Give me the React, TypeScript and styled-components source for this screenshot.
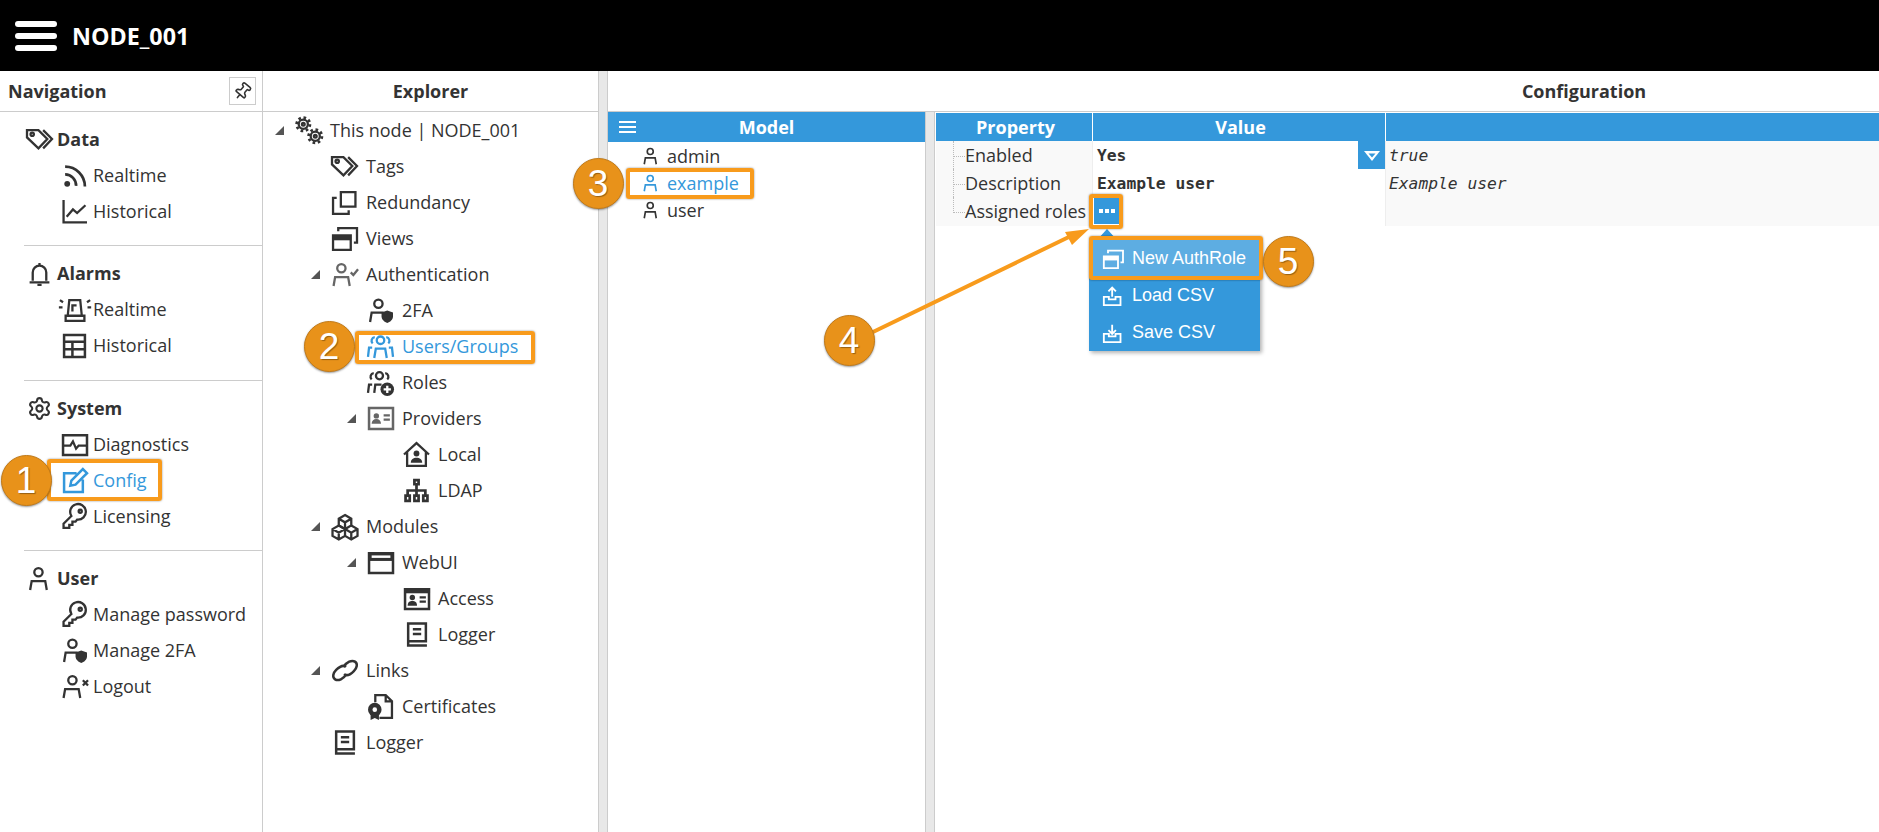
import React from 'react';
import styled, { createGlobalStyle } from 'styled-components';
import { Pin, Settings } from 'lucide-react';

const Global = createGlobalStyle`
  html, body { margin: 0; padding: 0; background: #fff; overflow: hidden; }
  body { font-family: "Open Sans", "Liberation Sans", sans-serif; color: #333; }
`;

const BLUE = '#3498db';
const ORANGE = '#f89b1c';

const Page = styled.div`
  position: relative;
  width: 1879px;
  height: 832px;
  overflow: hidden;
  display: flex;
  flex-direction: column;
`;

const TopBar = styled.header`
  height: 71px;
  flex: none;
  background: #000;
  display: flex;
  align-items: center;
  padding-left: 15px;
  gap: 15px;
`;
const Burger = styled.div`
  width: 42px;
  display: flex;
  flex-direction: column;
  gap: 6px;
  span { height: 6px; border-radius: 3px; background: #fff; }
`;
const NodeName = styled.div`
  color: #fff;
  font-weight: 700;
  font-size: 23.300px;
`;

const Body = styled.div`
  flex: 1;
  display: flex;
  min-height: 0;
`;

const NavPanel = styled.aside`
  width: 262px;
  flex: none;
  border-right: 1px solid #ccc;
`;
const ExplorerPanel = styled.section`
  width: 335px;
  flex: none;
`;
const Splitter = styled.div`
  width: 8px;
  flex: none;
  background: #e8e8e8;
  border-left: 1px solid #ccc;
  border-right: 1px solid #ccc;
`;
const ConfigPanel = styled.section`
  width: 1952px;
  flex: none;
  display: flex;
  flex-direction: column;
`;
const PanelHead = styled.div<{ $left?: boolean }>`
  height: 40px;
  flex: none;
  border-bottom: 1px solid #ccc;
  display: flex;
  align-items: center;
  justify-content: ${p => (p.$left ? 'space-between' : 'center')};
  padding: ${p => (p.$left ? '0 6px 0 8px' : '0')};
  font-weight: 700;
  font-size: 18px;
`;
const PinButton = styled.div`
  width: 25px;
  height: 26px;
  border: 1px solid #ccc;
  display: flex;
  align-items: center;
  justify-content: center;
  svg { transform: rotate(40deg); }
`;

const NavSection = styled.div<{ $last?: boolean; $pad?: number }>`
  margin-left: 24px;
  padding: 9px 0 ${p => p.$pad ?? 16}px;
  border-bottom: ${p => (p.$last ? 'none' : '1px solid #ccc')};
`;
const NavHeading = styled.div`
  height: 36px;
  display: flex;
  align-items: center;
  gap: 5px;
  padding-left: 3px;
  font-weight: 700;
  font-size: 18px;
`;
const NavItem = styled.div<{ $active?: boolean }>`
  height: 36px;
  display: flex;
  align-items: center;
  gap: 6px;
  padding-left: 38px;
  font-size: 18px;
  color: ${p => (p.$active ? BLUE : '#333')};
`;

const IconBox = styled.svg<{ $gray?: boolean }>`
  width: 25px;
  height: 25px;
  flex: none;
  overflow: visible;
  fill: none;
  stroke: ${p => (p.$gray ? '#666' : 'currentColor')};
  stroke-width: 2.200;
  .solid { fill: ${p => (p.$gray ? '#666' : 'currentColor')}; stroke: none; }
  .knock { fill: #fff; stroke: none; }
`;

const TreeRow = styled.div<{ $level: number; $active?: boolean }>`
  height: 36px;
  display: flex;
  align-items: center;
  padding-left: ${p => 12 + p.$level * 36}px;
  font-size: 18px;
  white-space: nowrap;
  color: ${p => (p.$active ? BLUE : '#333')};
`;
const Caret = styled.span<{ $open?: boolean }>`
  width: 21px;
  flex: none;
  display: flex;
  &::before {
    content: '';
    visibility: ${p => (p.$open ? 'visible' : 'hidden')};
    border-style: solid;
    border-width: 0 0 9px 9px;
    border-color: transparent transparent #555 transparent;
  }
`;
const TreeLabel = styled.span`
  margin-left: 9px;
`;

const ConfigBody = styled.div`
  flex: 1;
  display: flex;
  min-height: 0;
`;
const ModelPane = styled.div`
  width: 317px;
  flex: none;
`;
const BlueHead = styled.div`
  height: 30px;
  background: ${BLUE};
  color: #fff;
  font-weight: 700;
  font-size: 18px;
  display: flex;
  align-items: center;
  justify-content: center;
  position: relative;
`;
const MiniBurger = styled.div`
  position: absolute;
  left: 11px;
  top: 9px;
  width: 17px;
  display: flex;
  flex-direction: column;
  gap: 3px;
  span { height: 2px; background: #fff; }
`;
const ModelRow = styled.div<{ $active?: boolean }>`
  height: 27px;
  display: flex;
  align-items: center;
  gap: 7px;
  padding-left: 34px;
  font-size: 18px;
  color: ${p => (p.$active ? BLUE : '#333')};
  svg { width: 18px; height: 18px; }
`;

const Grid = styled.div`
  margin-left: 1px;
  padding-top: 1px;
  flex: 1;
`;
const GridRow = styled.div<{ $head?: boolean }>`
  display: grid;
  grid-template-columns: 157px 293px 1fr;
  height: 28px;
  box-sizing: border-box;
  border-bottom: ${p => (p.$head ? 'none' : '1px solid #eee')};
  background: ${p => (p.$head ? BLUE : 'transparent')};
`;
const HeadCell = styled.div`
  color: #fff;
  font-weight: 700;
  font-size: 18px;
  display: flex;
  align-items: center;
  justify-content: center;
  padding-left: 3px;
  border-right: 1px solid #fff;
`;
const PropCell = styled.div<{ $last?: boolean }>`
  position: relative;
  background: #f9f9f9;
  border-right: 1px solid #eee;
  padding-left: 29px;
  font-size: 18px;
  line-height: 29px;
  white-space: nowrap;
  &::before {
    content: '';
    position: absolute;
    left: 17px;
    top: 0;
    height: ${p => (p.$last ? '16px' : '28px')};
    border-left: 1px dotted #bbb;
  }
  &::after {
    content: '';
    position: absolute;
    left: 18px;
    top: 15px;
    width: 11px;
    border-top: 1px dotted #bbb;
  }
`;
const ValueCell = styled.div`
  position: relative;
  background: #fff;
  border-right: 1px solid #eee;
  padding-left: 4px;
  font-family: "DejaVu Sans Mono", "Liberation Mono", monospace;
  font-weight: 700;
  font-size: 16.300px;
  line-height: 29px;
`;
const DefaultCell = styled.div`
  background: #f9f9f9;
  padding-left: 3px;
  font-family: "DejaVu Sans Mono", "Liberation Mono", monospace;
  font-style: italic;
  font-size: 16.300px;
  line-height: 29px;
`;
const SelectArrow = styled.div`
  position: absolute;
  right: 0;
  top: 0;
  bottom: 0;
  width: 27px;
  background: ${BLUE};
  display: flex;
  align-items: center;
  justify-content: center;
`;
const EllipsisButton = styled.div`
  position: absolute;
  left: 1px;
  top: 0;
  width: 25px;
  height: 27px;
  background: ${BLUE};
  display: flex;
  align-items: center;
  justify-content: center;
  gap: 2px;
  i { width: 4px; height: 4px; background: #fff; }
`;
const Menu = styled.div`
  position: absolute;
  left: -4px;
  top: 43px;
  width: 171px;
  background: ${BLUE};
  box-shadow: 2px 2px 4px rgba(0, 0, 0, 0.3);
  color: #fff;
  font-family: "Liberation Sans", Arial, sans-serif;
  font-weight: 400;
  font-size: 18px;
  &::before {
    content: '';
    position: absolute;
    left: 8px;
    top: -11px;
    border-style: solid;
    border-width: 0 10px 11px 10px;
    border-color: transparent transparent ${BLUE} transparent;
  }
`;
const MenuItem = styled.div<{ $hover?: boolean }>`
  height: 37px;
  display: flex;
  align-items: center;
  gap: 9px;
  padding-left: 14px;
  background: ${p => (p.$hover ? '#5dade2' : 'transparent')};
  svg { width: 20px; height: 20px; }
`;

const Highlight = styled.div<{ $x: number; $y: number; $w: number; $h: number }>`
  position: absolute;
  left: ${p => p.$x}px;
  top: ${p => p.$y}px;
  width: ${p => p.$w}px;
  height: ${p => p.$h}px;
  box-sizing: border-box;
  border: 4px solid ${ORANGE};
  border-radius: 3px;
  box-shadow: 0 0 2px rgba(0, 0, 0, 0.5);
`;
const Badge = styled.div<{ $x: number; $y: number }>`
  position: absolute;
  left: ${p => p.$x - 25.500}px;
  top: ${p => p.$y - 25.500}px;
  width: 51px;
  height: 51px;
  box-sizing: border-box;
  border-radius: 50%;
  background: #e8921a;
  border: 1px solid #c27a17;
  box-shadow: 0 1px 2px rgba(0, 0, 0, 0.4);
  color: #fff;
  font-family: "Liberation Sans", Arial, sans-serif;
  font-size: 37px;
  line-height: 49px;
  text-align: center;
  text-shadow: 1px 1px 1px rgba(0, 0, 0, 0.35);
`;
const ArrowLayer = styled.svg`
  position: absolute;
  left: 0;
  top: 0;
  width: 1879px;
  height: 832px;
  pointer-events: none;
`;

const gear = (x: number, y: number, r: number) => (
  <>
    <circle cx={x} cy={y} r={r} />
    <circle cx={x} cy={y} r={r + 2} strokeWidth={2.600} strokeDasharray="2.500 2.530" />
    <circle cx={x} cy={y} r={r * 0.3} />
  </>
);

const userBody = (
  <>
    <circle cx="11" cy="6" r="4" />
    <path d="M3 23l1.500-8.500h13L19 23" />
  </>
);

const paths: Record<string, React.ReactNode> = {
  tags: (
    <>
      <path d="M0 3h11l8.500 8.500-8.500 9L0 10z" />
      <circle cx="5" cy="7" r="1.600" />
      <path d="M15.500 3l8.500 8.500-8.500 9" />
    </>
  ),
  rss: (
    <>
      <circle className="solid" cx="5" cy="20" r="2.800" />
      <path d="M3 11a10.500 10.500 0 0 1 10.500 11M3 3.500a19 19 0 0 1 19 19" strokeWidth="2.600" />
    </>
  ),
  chart: <path d="M1.500 1v21.500H24M4.500 17l6-7 4 3.500L22.500 6" />,
  bell: (
    <>
      <path d="M5.500 19v-8a6.500 6.500 0 0 1 13 0v8M2.500 20.500h19" />
      <path d="M12 2v2.500M10 23h4" />
    </>
  ),
  siren: (
    <>
      <path d="M5.500 18L7 3h10.500L19 18M3.500 18h18v5h-18zM10 14V8h4" />
      <path d="M-2 3l3 2M-3 10h3.500M27 3l-3 2M28 10h-3.500" />
    </>
  ),
  table: <path d="M2 2h20v21H2zM2 8.500h20M2 15.500h20M10 8.500V23" strokeWidth="2.400" />,
  pulse: (
    <>
      <path d="M1 3h23v19H1z" strokeWidth="2.400" />
      <path d="M1 13h7l2.500-4 3 7 2.500-3h8" />
    </>
  ),
  edit: <path d="M14 5H2v18h18V11M8 17l1-5L20 1l4 4-11 11z" strokeWidth="2.400" />,
  key: (
    <>
      <path d="M9 11.500L1.500 19v4h5.500v-3h3v-3h3l1.500-2A7.500 7.500 0 1 0 9 11.500z" strokeWidth="2.200" />
      <circle cx="17.500" cy="7" r="1.500" />
    </>
  ),
  user: userBody,
  userShield: (
    <>
      <circle cx="10" cy="5.500" r="4" />
      <path d="M2 23l1.500-9H15" />
      <path className="solid" d="M13 14l5.500-2 5.500 2v3.500c0 3.500-3 5.500-5.500 6.500-2.500-1-5.500-3-5.500-6.500z" />
    </>
  ),
  userX: (
    <>
      <circle cx="10" cy="6" r="4" />
      <path d="M1.500 23L3 14.500h13l1.500 8.500M20 6l5 5M25 6l-5 5" />
    </>
  ),
  userCheck: (
    <>
      <circle cx="9" cy="6" r="4" />
      <path d="M1.500 23L3 14.500h12.500L17 23M18 10l2.500 2.500L25 7" />
    </>
  ),
  users: (
    <>
      <circle cx="12" cy="6" r="3.600" />
      <path d="M6 23l1.500-9h9L18 23" />
      <path d="M4.500 9a3.500 3.500 0 0 1 2-6M19.500 9a3.500 3.500 0 0 0-2-6M0 22l1-9h3M24 22l-1-9h-3" />
    </>
  ),
  usersPlus: (
    <>
      <circle cx="11" cy="5.500" r="3.400" />
      <path d="M3.500 9a3.500 3.500 0 0 1 2-6M18.500 9a3.500 3.500 0 0 0-2-6M0 22l1-8h3M6 22l1-8h6" />
      <circle className="solid" cx="18.500" cy="18.500" r="6.500" />
      <path d="M18.500 15v7M15 18.500h7" stroke="#fff" />
    </>
  ),
  copy: <path d="M8.500 2h14v14h-14zM4.500 7.500H1V23h15v-3.500" />,
  views: (
    <>
      <path d="M1 9h17v14H1zM1 12.500h17" />
      <path className="solid" d="M1 9h17v4.500H1z" />
      <path d="M6 5V2h18v14h-3" />
    </>
  ),
  card: (
    <>
      <path d="M1 2h23v20H1z" strokeWidth="2.400" />
      <circle className="solid" cx="8" cy="9.500" r="2.600" />
      <path className="solid" d="M3.500 17c0-3 2-4.500 4.500-4.500s4.500 1.500 4.500 4.500z" />
      <path d="M15 9h6M15 13h6" />
    </>
  ),
  home: (
    <>
      <path d="M0 12L12 1l12 11M3 9.500V23h18V9.500" strokeWidth="2.200" />
      <circle className="solid" cx="12" cy="11" r="2.800" />
      <path className="solid" d="M6.500 20c0-3.500 2.500-5 5.500-5s5.500 1.500 5.500 5z" />
    </>
  ),
  sitemap: <path d="M10 2h4v4h-4zM12 6v6M3.500 16.500v-4.500h17v4.500M1.500 17h4v5h-4zM10 17h4v5h-4zM18.500 17h4v5h-4zM12 12v5" strokeWidth="2.600" />,
  cubes: (
    <>
      <path d="M12.500 1l6 3.500v6.500l-6 3.500-6-3.500V4.500zM6.500 4.500l6 3.500 6-3.500M12.500 8v6.500" />
      <path d="M6.500 11l6 3.500V21l-6 3.500L.5 21v-6.500zM.5 14.500l6 3.500 6-3.500M6.500 18v6.500" />
      <path d="M18.500 11l6 3.500V21l-6 3.500-6-3.500M12.500 14.500l6 3.500 6-3.500M18.500 18v6.500" />
    </>
  ),
  web: (
    <>
      <path d="M1 3h23v19H1z" strokeWidth="2.400" />
      <path className="solid" d="M1 3h23v7.500H1z" />
      <path className="knock" d="M3.500 5.200h18v2.400h-18z" />
    </>
  ),
  access: (
    <>
      <path className="solid" d="M0 2h25v5H0z" />
      <path d="M1 3h23v19H1z" strokeWidth="2.400" />
      <circle className="solid" cx="8" cy="11" r="2.600" />
      <path className="solid" d="M3.500 19c0-3.500 2-4.500 4.500-4.500s4.500 1 4.500 4.500z" />
      <path d="M15 11h6M15 15h6" />
    </>
  ),
  book: <path d="M4 1.500h17v17H4zM4 1.500v21h18M8.500 7h8M8.500 11.500h8" strokeWidth="2.400" />,
  link: (
    <>
      <path d="M11 8.500C14 4 19 1.500 22 3.500s2 6-1 9-7 5-9.500 3" strokeWidth="2.400" />
      <path d="M14 15.500C11 20 6 22.500 3 20.500s-2-6 1-9 7-5 9.500-3" strokeWidth="2.400" />
    </>
  ),
  cert: (
    <>
      <path d="M7 8V1h10l6 6v16H11M17 1v6h6" />
      <circle className="solid" cx="6.500" cy="15" r="6.500" />
      <circle className="knock" cx="6.500" cy="15" r="2.200" />
      <path className="solid" d="M2.500 19v6l4-2 4 2v-6z" />
    </>
  ),
  upload: <path d="M1 13h6v3h8v-3h6v10H1zM11 13V2M6.500 6.500L11 2l4.500 4.500" />,
  download: <path d="M1 13h6v3h8v-3h6v10H1zM11 2v11M6.500 8.500L11 13l4.500-4.500" />,
  gears: (
    <>
      {gear(7, 6, 4.400)}
      {gear(18.500, 17.500, 4.400)}
    </>
  ),
};

const Icon = ({ name, gray }: { name: string; gray?: boolean }) => (
  <IconBox viewBox="0 0 24 24" $gray={gray}>
    {paths[name]}
  </IconBox>
);

const navData = [
  { title: 'Data', icon: 'tags', items: [['Realtime', 'rss'], ['Historical', 'chart']] },
  { title: 'Alarms', icon: 'bell', pad: 17, items: [['Realtime', 'siren'], ['Historical', 'table']] },
  { title: 'System', icon: 'gear', items: [['Diagnostics', 'pulse'], ['Config', 'edit'], ['Licensing', 'key']] },
  { title: 'User', icon: 'user', items: [['Manage password', 'key'], ['Manage 2FA', 'userShield'], ['Logout', 'userX']] },
];

const treeData: { label: string; icon: string; level: number; open?: boolean; gray?: boolean }[] = [
  { label: 'This node | NODE_001', icon: 'gears', level: 0, open: true },
  { label: 'Tags', icon: 'tags', level: 1 },
  { label: 'Redundancy', icon: 'copy', level: 1 },
  { label: 'Views', icon: 'views', level: 1 },
  { label: 'Authentication', icon: 'userCheck', level: 1, open: true, gray: true },
  { label: '2FA', icon: 'userShield', level: 2 },
  { label: 'Users/Groups', icon: 'users', level: 2 },
  { label: 'Roles', icon: 'usersPlus', level: 2 },
  { label: 'Providers', icon: 'card', level: 2, open: true, gray: true },
  { label: 'Local', icon: 'home', level: 3 },
  { label: 'LDAP', icon: 'sitemap', level: 3 },
  { label: 'Modules', icon: 'cubes', level: 1, open: true },
  { label: 'WebUI', icon: 'web', level: 2, open: true },
  { label: 'Access', icon: 'access', level: 3 },
  { label: 'Logger', icon: 'book', level: 3 },
  { label: 'Links', icon: 'link', level: 1, open: true },
  { label: 'Certificates', icon: 'cert', level: 2 },
  { label: 'Logger', icon: 'book', level: 1 },
];

export default function App() {
  return (
    <Page>
      <Global />
      <TopBar>
        <Burger><span /><span /><span /></Burger>
        <NodeName>NODE_001</NodeName>
      </TopBar>
      <Body>
        <NavPanel>
          <PanelHead $left>
            Navigation
            <PinButton><Pin size={19} strokeWidth={2} /></PinButton>
          </PanelHead>
          {navData.map((s, i) => (
            <NavSection key={s.title} $last={i === navData.length - 1} $pad={s.pad}>
              <NavHeading>
                {s.icon === 'gear' ? <Settings size={25} strokeWidth={2} /> : <Icon name={s.icon} />}
                {s.title}
              </NavHeading>
              {s.items.map(([label, icon]) => (
                <NavItem key={label} $active={label === 'Config'}>
                  <Icon name={icon} />
                  {label}
                </NavItem>
              ))}
            </NavSection>
          ))}
        </NavPanel>
        <ExplorerPanel>
          <PanelHead>Explorer</PanelHead>
          {treeData.map((r, i) => (
            <TreeRow key={i} $level={r.level} $active={r.label === 'Users/Groups'}>
              <Caret $open={r.open} />
              <Icon name={r.icon} gray={r.gray} />
              <TreeLabel>{r.label}</TreeLabel>
            </TreeRow>
          ))}
        </ExplorerPanel>
        <Splitter />
        <ConfigPanel>
          <PanelHead>Configuration</PanelHead>
          <ConfigBody>
            <ModelPane>
              <BlueHead>
                <MiniBurger><span /><span /><span /></MiniBurger>
                Model
              </BlueHead>
              <ModelRow><Icon name="user" />admin</ModelRow>
              <ModelRow $active><Icon name="user" />example</ModelRow>
              <ModelRow><Icon name="user" />user</ModelRow>
            </ModelPane>
            <Splitter />
            <Grid>
              <GridRow $head>
                <HeadCell>Property</HeadCell>
                <HeadCell>Value</HeadCell>
                <HeadCell />
              </GridRow>
              <GridRow>
                <PropCell>Enabled</PropCell>
                <ValueCell>
                  Yes
                  <SelectArrow>
                    <svg width="16" height="10" viewBox="0 0 16 10">
                      <path d="M0 0h16L8 10z" fill="#fff" />
                      <path d="M4.500 2.500h7L8 6.500z" fill={BLUE} />
                    </svg>
                  </SelectArrow>
                </ValueCell>
                <DefaultCell>true</DefaultCell>
              </GridRow>
              <GridRow>
                <PropCell>Description</PropCell>
                <ValueCell>Example user</ValueCell>
                <DefaultCell>Example user</DefaultCell>
              </GridRow>
              <GridRow>
                <PropCell $last>Assigned roles</PropCell>
                <ValueCell>
                  <EllipsisButton><i /><i /><i /></EllipsisButton>
                  <Menu>
                    <MenuItem $hover><Icon name="views" />New AuthRole</MenuItem>
                    <MenuItem><Icon name="upload" />Load CSV</MenuItem>
                    <MenuItem><Icon name="download" />Save CSV</MenuItem>
                  </Menu>
                </ValueCell>
                <DefaultCell />
              </GridRow>
            </Grid>
          </ConfigBody>
        </ConfigPanel>
      </Body>

      <Highlight $x={47} $y={459} $w={115} $h={42} />
      <Highlight $x={355} $y={331} $w={180} $h={33} />
      <Highlight $x={626} $y={168} $w={128} $h={31} />
      <Highlight $x={1089} $y={194} $w={34} $h={35} />
      <Highlight $x={1089} $y={236} $w={174} $h={44} />
      <ArrowLayer viewBox="0 0 1879 832">
        <path d="M873 332L1075 234" stroke={ORANGE} strokeWidth="4" fill="none" />
        <path d="M1089 229L1065 232L1072 245z" fill={ORANGE} />
      </ArrowLayer>
      <Badge $x={26} $y={480}>1</Badge>
      <Badge $x={329} $y={346}>2</Badge>
      <Badge $x={598} $y={183}>3</Badge>
      <Badge $x={849} $y={340}>4</Badge>
      <Badge $x={1288} $y={261}>5</Badge>
    </Page>
  );
}
